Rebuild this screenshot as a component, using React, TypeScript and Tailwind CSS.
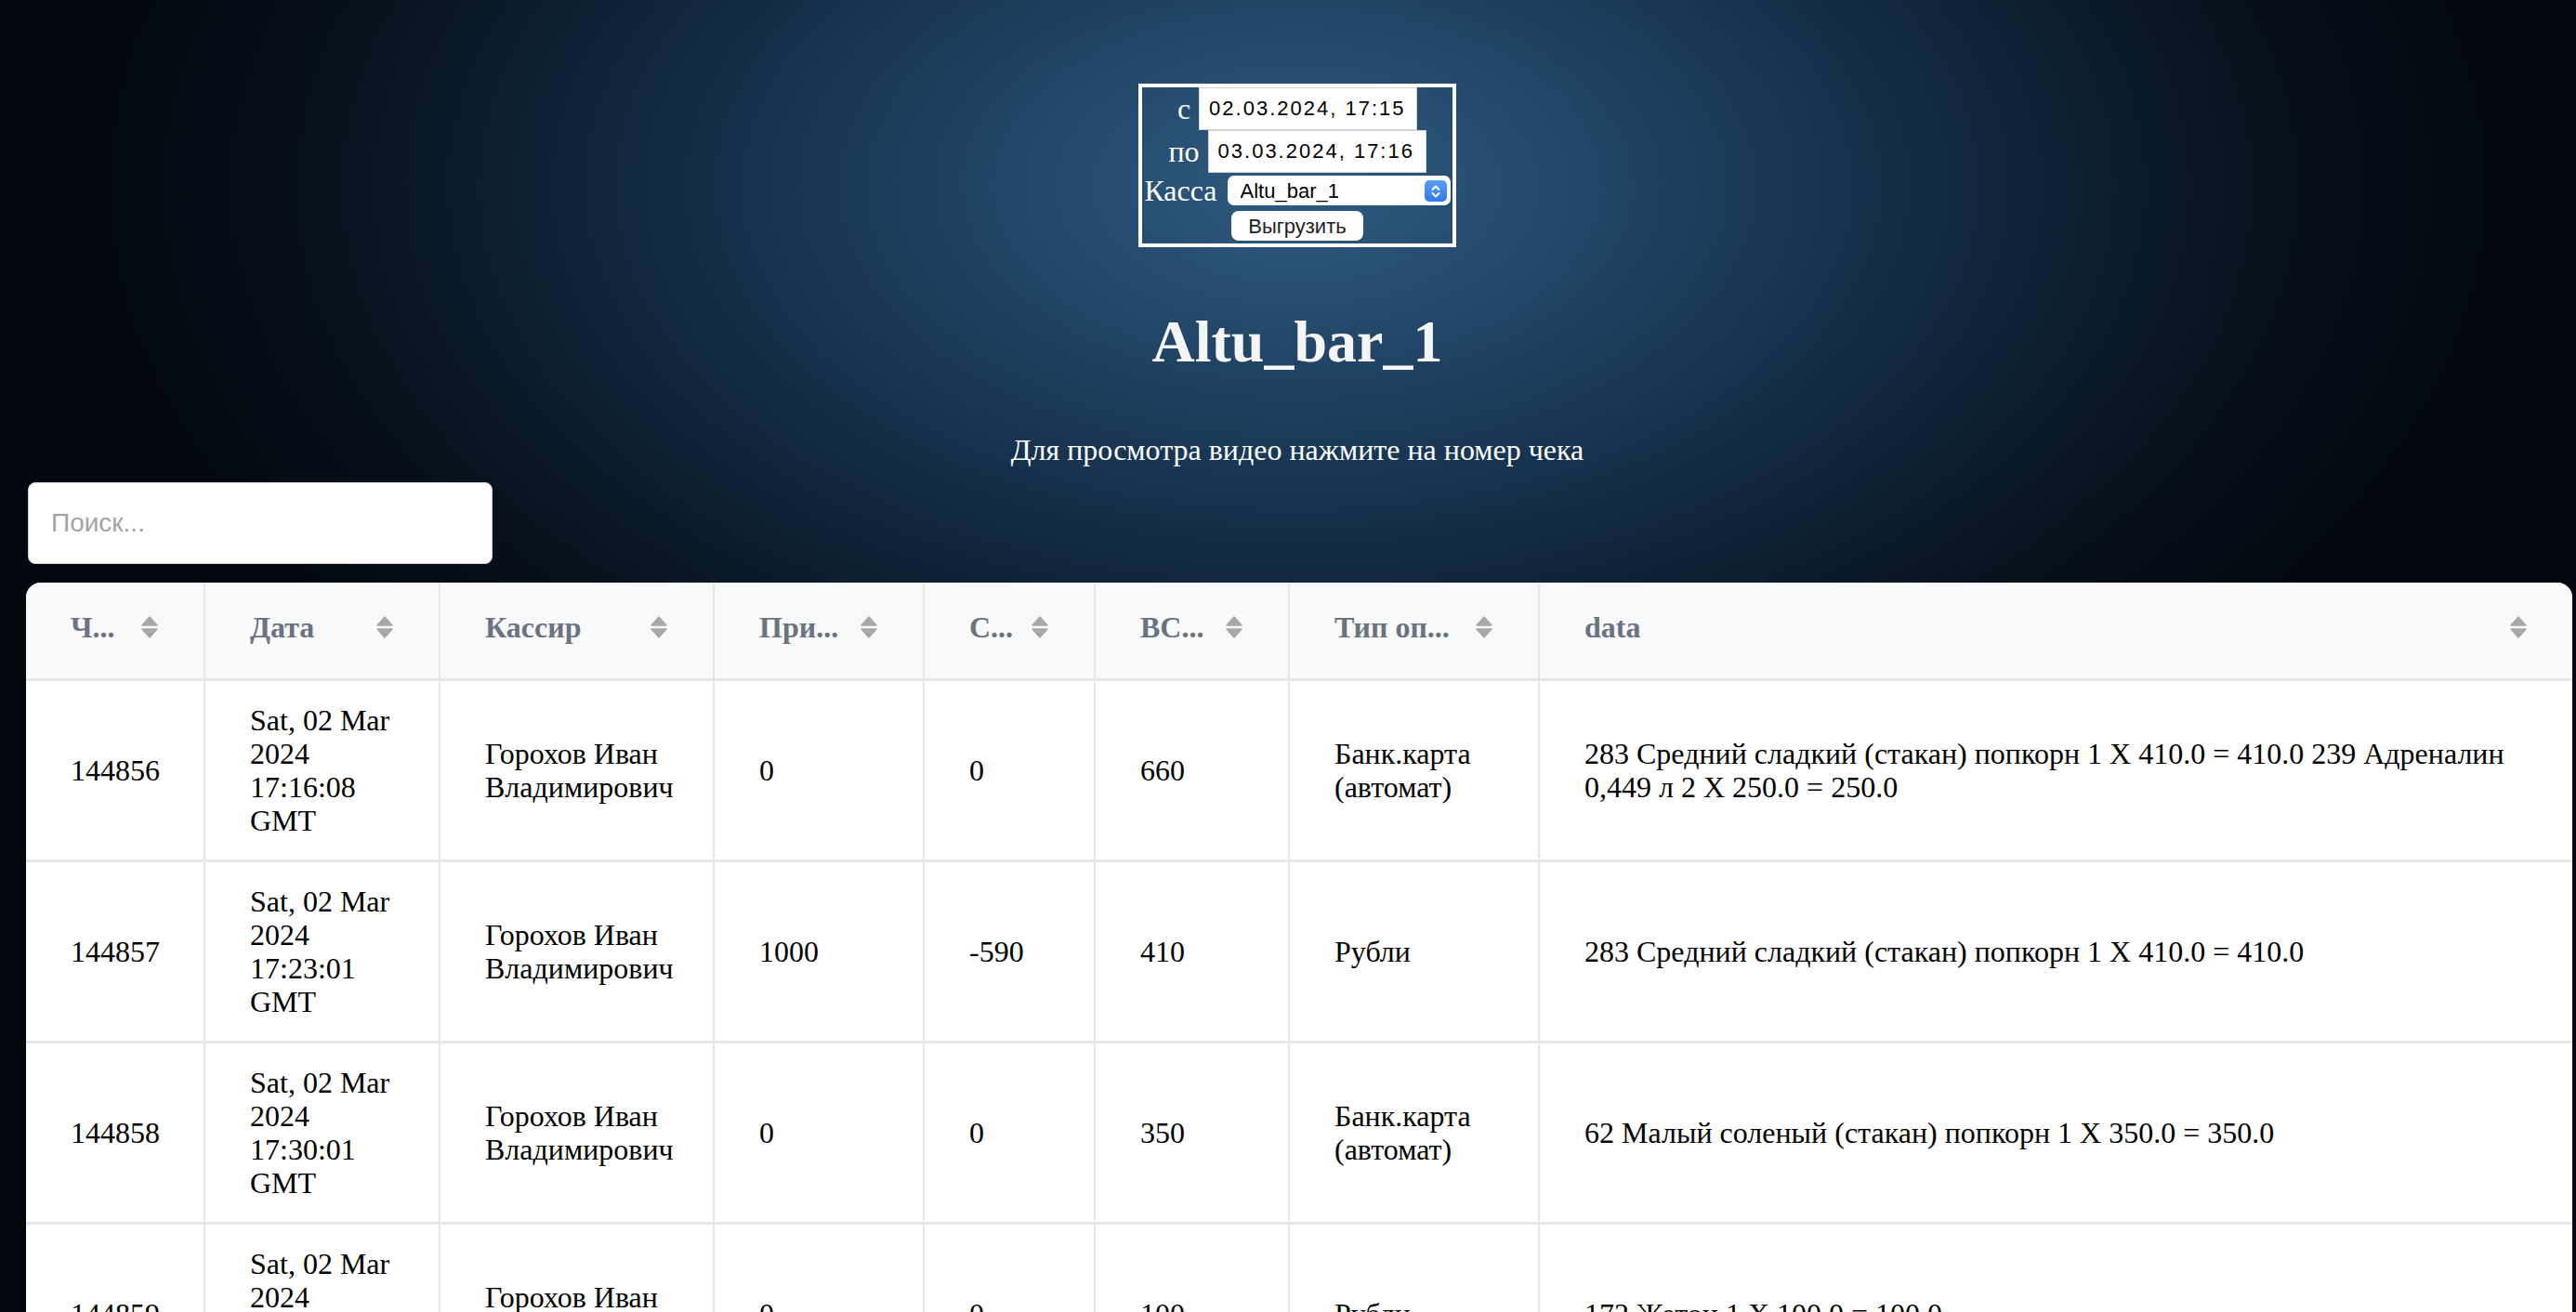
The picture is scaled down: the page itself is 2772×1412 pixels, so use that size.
import React from "react";

type Row = {
  id: string;
  date: string;
  cashier: string;
  paid: string;
  change: string;
  total: string;
  payment: string;
  data: string;
};

const rows: Row[] = [
  {
    id: "144856",
    date: "Sat, 02 Mar 2024 17:16:08 GMT",
    cashier: "Горохов Иван Владимирович",
    paid: "0",
    change: "0",
    total: "660",
    payment: "Банк.карта (автомат)",
    data: "283 Средний сладкий (стакан) попкорн 1 X 410.0 = 410.0 239 Адреналин 0,449 л 2 X 250.0 = 250.0",
  },
  {
    id: "144857",
    date: "Sat, 02 Mar 2024 17:23:01 GMT",
    cashier: "Горохов Иван Владимирович",
    paid: "1000",
    change: "-590",
    total: "410",
    payment: "Рубли",
    data: "283 Средний сладкий (стакан) попкорн 1 X 410.0 = 410.0",
  },
  {
    id: "144858",
    date: "Sat, 02 Mar 2024 17:30:01 GMT",
    cashier: "Горохов Иван Владимирович",
    paid: "0",
    change: "0",
    total: "350",
    payment: "Банк.карта (автомат)",
    data: "62 Малый соленый (стакан) попкорн 1 X 350.0 = 350.0",
  },
  {
    id: "144859",
    date: "Sat, 02 Mar 2024 17:41:27 GMT",
    cashier: "Горохов Иван Владимирович",
    paid: "0",
    change: "0",
    total: "100",
    payment: "Рубли",
    data: "172 Жетон 1 X 100.0 = 100.0",
  },
  {
    id: "144860",
    date: "Sat, 02 Mar 2024 17:52:44 GMT",
    cashier: "Горохов Иван Владимирович",
    paid: "500",
    change: "-90",
    total: "410",
    payment: "Рубли",
    data: "283 Средний сладкий (стакан) попкорн 1 X 410.0 = 410.0",
  },
];

const headers = ["Ч...", "Дата", "Кассир", "При...", "С...", "ВС...", "Тип оп...", "data"];
const widths = ["w-[193px]", "w-[253px]", "w-[295px]", "w-[226px]", "w-[184px]", "w-[209px]", "w-[269px]", "w-auto"];

function SortIcon() {
  return (
    <svg width="20" height="26" viewBox="0 0 20 26" className="shrink-0">
      <path d="M10 2 L18 11 H2 Z" fill="#a8a8a8" stroke="#a8a8a8" strokeWidth="1.5" strokeLinejoin="round" />
      <path d="M2 15 H18 L10 24 Z" fill="#a8a8a8" stroke="#a8a8a8" strokeWidth="1.5" strokeLinejoin="round" />
    </svg>
  );
}

function DateField({ label, value }: { label: string; value: string }) {
  return (
    <div className="flex h-[46px] items-center gap-[9px]">
      <span className="text-[32px] leading-none text-white">{label}</span>
      <input
        readOnly
        value={value}
        className="h-[46px] w-[235px] border border-[#d4d4d4] bg-white px-[10px] font-['Liberation_Sans',Arial,sans-serif] text-[22px] tracking-[2px] text-black outline-none"
      />
    </div>
  );
}

export default function App() {
  return (
    <div className="min-h-screen bg-[#040a12] bg-[radial-gradient(ellipse_1300px_760px_at_1396px_200px,#2f5b80_0%,#214566_25%,#112840_55%,#07121e_80%,#03080f_100%)] font-['Liberation_Serif','Times_New_Roman',serif] pt-[90px]">
      <header className="flex flex-col items-center pl-[20px] text-white">
        <form className="flex flex-col items-center border-4 border-white px-[2px]">
          <DateField label="с" value="02.03.2024, 17:15" />
          <DateField label="по" value="03.03.2024, 17:16" />
          <div className="flex h-[38px] items-center gap-[11px]">
            <span className="text-[32px] leading-none">Касса</span>
            <div className="relative">
              <select className="h-[32px] w-[240px] appearance-none rounded-[7px] bg-white pl-[14px] font-['Liberation_Sans',Arial,sans-serif] text-[22px] text-black outline-none">
                <option>Altu_bar_1</option>
              </select>
              <div className="pointer-events-none absolute right-[4px] top-[5px] flex h-[23px] w-[24px] items-center justify-center rounded-[5px] bg-gradient-to-b from-[#5b9df9] to-[#2f78ee]">
                <svg width="12" height="16" viewBox="0 0 12 16" fill="none" stroke="white" strokeWidth="2" strokeLinecap="round" strokeLinejoin="round">
                  <path d="M2.5 6 L6 2.5 L9.5 6" />
                  <path d="M2.5 10 L6 13.5 L9.5 10" />
                </svg>
              </div>
            </div>
          </div>
          <button
            type="button"
            className="my-[3px] h-[32px] w-[142px] rounded-[8px] bg-white font-['Liberation_Sans',Arial,sans-serif] text-[22px] text-[#222]"
          >
            Выгрузить
          </button>
        </form>

        <h1 className="mt-[70px] text-[64px] font-bold leading-none text-[#f5f5f5]">Altu_bar_1</h1>
        <p className="mt-[68px] mb-[6px] text-[32px] leading-none text-white">Для просмотра видео нажмите на номер чека</p>
      </header>

      <div className="mt-[13px] pl-[30px]">
        <input
          placeholder="Поиск..."
          className="h-[88px] w-[500px] rounded-[8px] border border-[#d1d5db] bg-white px-[24px] font-['Liberation_Sans',Arial,sans-serif] text-[28px] text-black outline-none placeholder:text-[#a3a3a3]"
        />
      </div>

      <div className="ml-[28px] mr-[4px] mt-[20px] overflow-hidden rounded-t-[16px] bg-white">
        <table className="w-full table-fixed border-separate border-spacing-0">
          <colgroup>
            {widths.map((w, i) => (
              <col key={i} className={w} />
            ))}
          </colgroup>
          <thead>
            <tr className="bg-[#f8f9fa]">
              {headers.map((h, i) => (
                <th
                  key={h}
                  className={`border-b-[3px] border-[#e5e7eb] p-0 text-left ${i < headers.length - 1 ? "border-r-2" : ""}`}
                >
                  <div className="flex h-[103px] items-center justify-between pb-[8px] pl-[48px] pr-[48px]">
                    <span className="truncate text-[32px] font-bold text-[#6b7280]">{h}</span>
                    <SortIcon />
                  </div>
                </th>
              ))}
            </tr>
          </thead>
          <tbody>
            {rows.map((r) => {
              const cells = [r.id, r.date, r.cashier, r.paid, r.change, r.total, r.payment, r.data];
              return (
                <tr key={r.id}>
                  {cells.map((c, i) => (
                    <td
                      key={i}
                      className={`border-b-[3px] border-[#e5e7eb] py-[24px] pl-[48px] pr-[32px] align-middle text-[32px] leading-[36px] text-black ${i < cells.length - 1 ? "border-r-2" : ""}`}
                    >
                      {c}
                    </td>
                  ))}
                </tr>
              );
            })}
          </tbody>
        </table>
      </div>
    </div>
  );
}
